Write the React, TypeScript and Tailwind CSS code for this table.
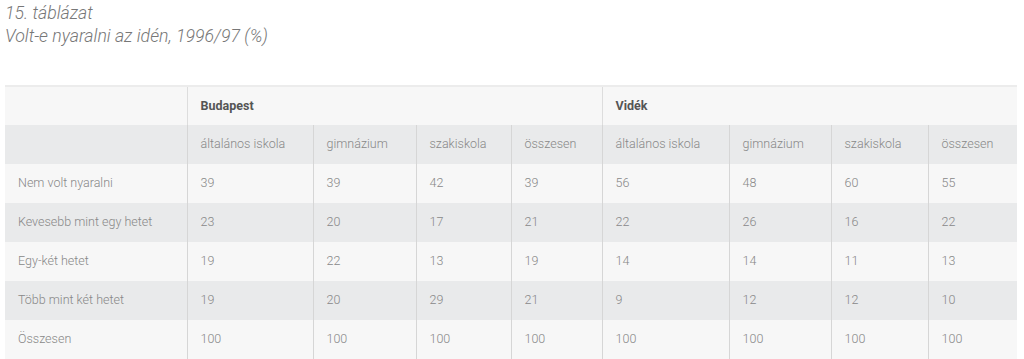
import React from "react";

const cols = [182, 126, 103, 95, 91, 127, 102, 97, 89];
const sub = ["általános iskola", "gimnázium", "szakiskola", "összesen"];
const rows: [string, string[]][] = [
  ["Nem volt nyaralni", ["39", "39", "42", "39", "56", "48", "60", "55"]],
  ["Kevesebb mint egy hetet", ["23", "20", "17", "21", "22", "26", "16", "22"]],
  ["Egy-két hetet", ["19", "22", "13", "19", "14", "14", "11", "13"]],
  ["Több mint két hetet", ["19", "20", "29", "21", "9", "12", "12", "10"]],
  ["Összesen", ["100", "100", "100", "100", "100", "100", "100", "100"]],
];

export default function App() {
  return (
    <div className="w-[1024px] h-[359px] bg-white overflow-hidden pl-[5px] pt-[2px]" style={{ fontFamily: "Roboto, 'Liberation Sans', sans-serif" }}>
      <div className="text-[17.7px] leading-[23px] italic font-light text-[#777]">
        <div>15. táblázat</div>
        <div>Volt-e nyaralni az idén, 1996/97 (%)</div>
      </div>
      <table className="mt-[37px] border-collapse table-fixed w-[1012px] border-t-2 border-[#ececec] text-[12.5px] font-light text-[#888]">
        <colgroup>
          {cols.map((w, i) => (
            <col key={i} style={{ width: w }} />
          ))}
        </colgroup>
        <tbody>
          <tr className="h-[39px] bg-[#f7f7f7]">
            <td className="border-r border-[#dddddd]"></td>
            <td colSpan={4} className="pl-[13px] font-bold text-[12.5px] text-[#555] border-r border-[#dddddd]">Budapest</td>
            <td colSpan={4} className="pl-[13px] font-bold text-[12.5px] text-[#555]">Vidék</td>
          </tr>
          <tr className="h-[39px] bg-[#e9eaeb]">
            <td className="border-r border-[#d6d6d6]"></td>
            {[...sub, ...sub].map((s, i) => (
              <td key={i} className={`pl-[13px] ${i < 7 ? "border-r border-[#d6d6d6]" : ""}`}>{s}</td>
            ))}
          </tr>
          {rows.map(([label, vals], r) => (
            <tr key={r} className={`h-[39px] ${r % 2 === 0 ? "bg-[#f7f7f7]" : "bg-[#e9eaeb]"}`}>
              <td className="pl-[13px] border-r border-[#d6d6d6]">{label}</td>
              {vals.map((v, i) => (
                <td key={i} className={`pl-[13px] ${i < 7 ? "border-r border-[#d6d6d6]" : ""}`}>{v}</td>
              ))}
            </tr>
          ))}
        </tbody>
      </table>
    </div>
  );
}
